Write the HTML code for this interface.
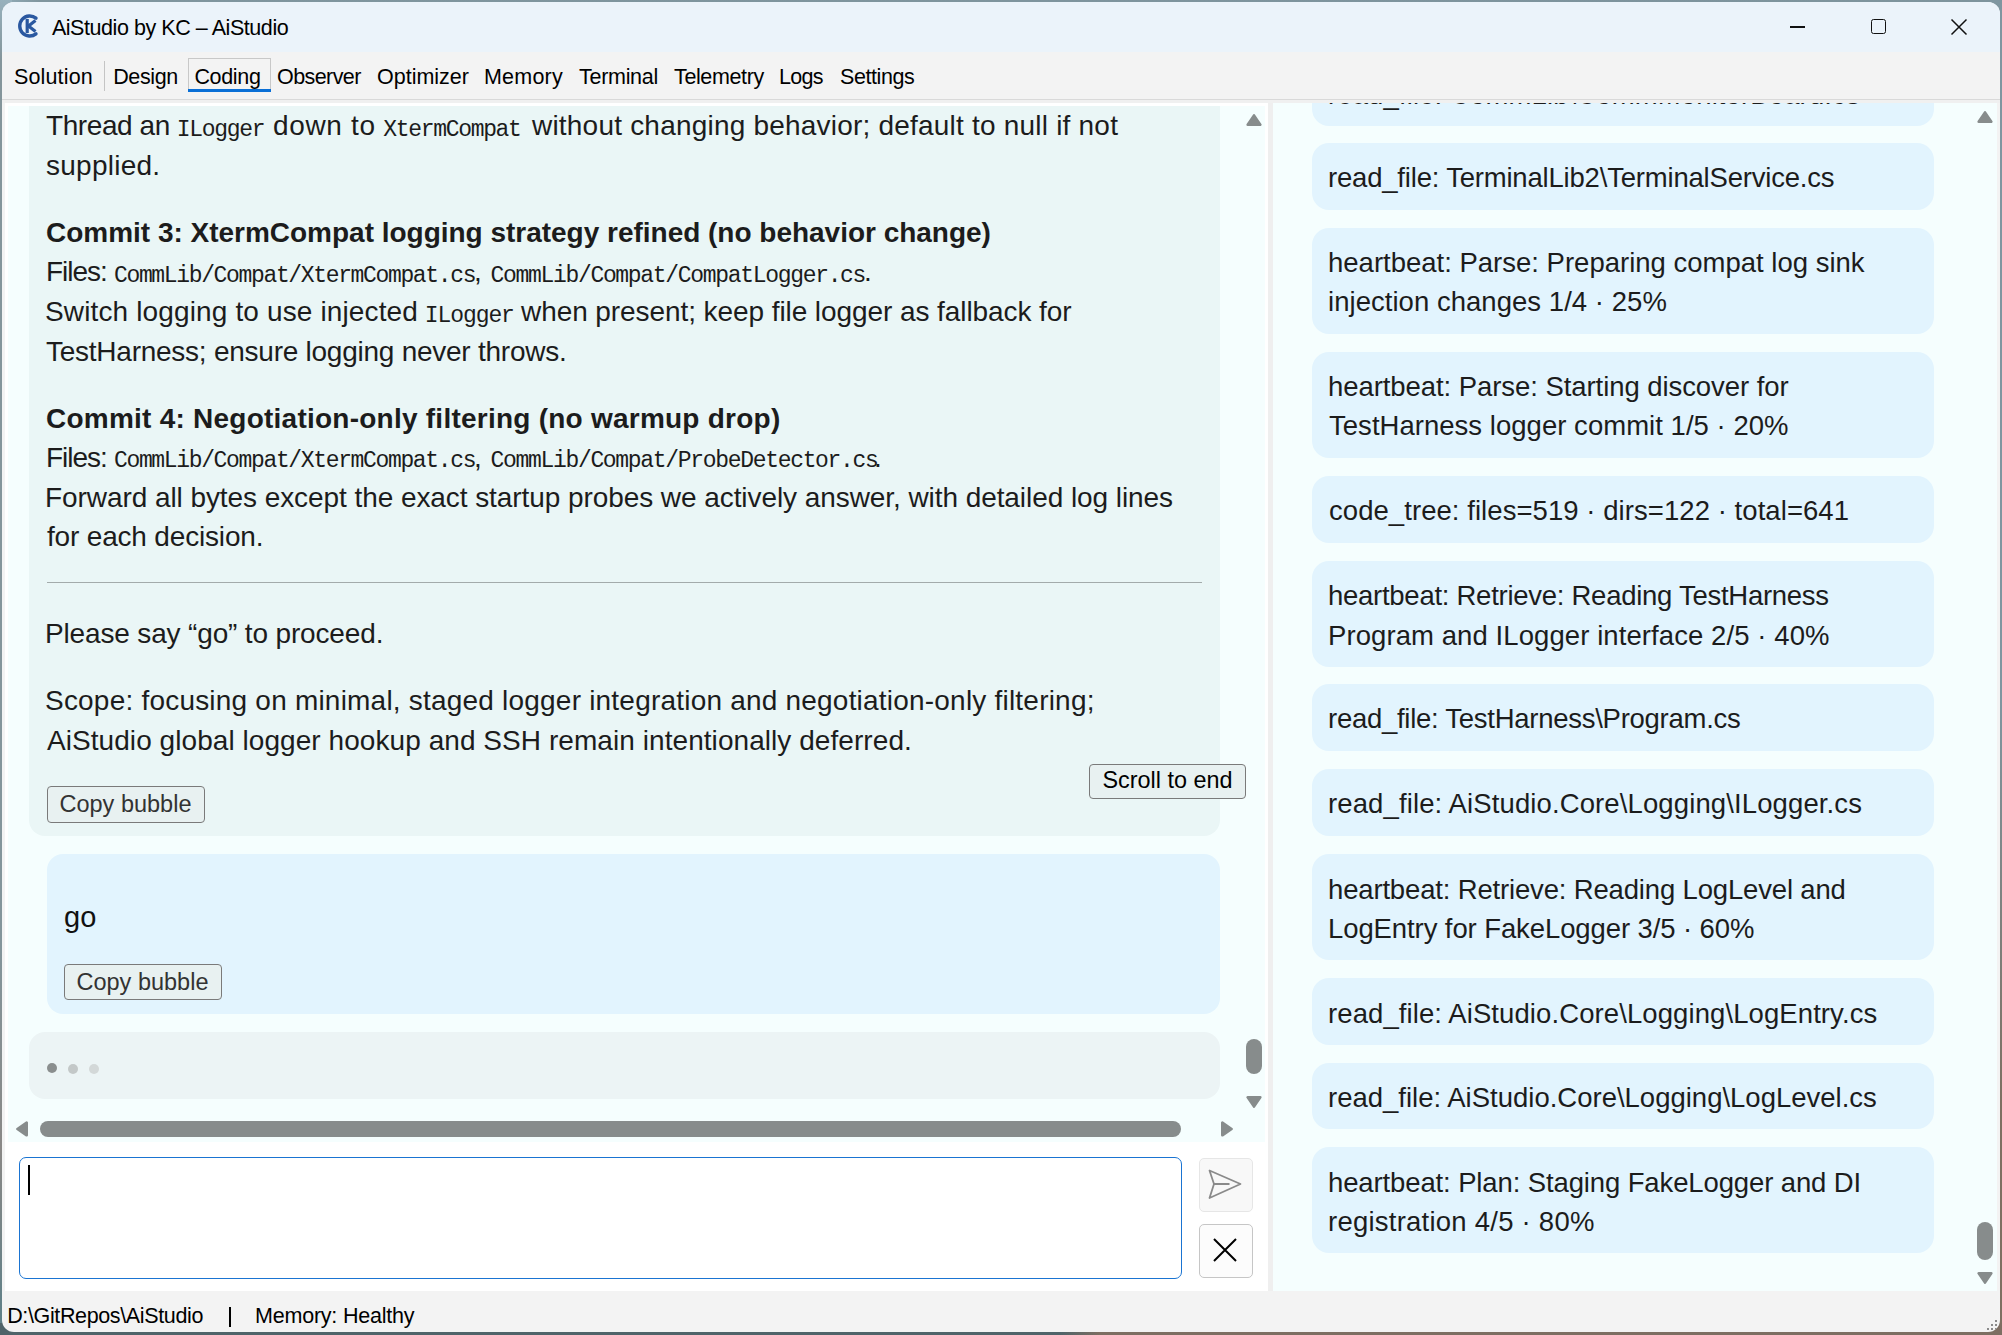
<!DOCTYPE html>
<html><head><meta charset="utf-8">
<style>
*{margin:0;padding:0;box-sizing:border-box}
html,body{width:2002px;height:1335px;overflow:hidden}
body{position:relative;font-family:"Liberation Sans",sans-serif;color:#111;background:linear-gradient(180deg,#8399a3 0%,#6d858c 60%,#7b6e62 100%)}
.a{position:absolute}
.t{position:absolute;white-space:pre;font-family:"Liberation Sans",sans-serif}
.m{font-family:"Liberation Mono",monospace;font-size:23px;letter-spacing:-1.35px}
#win{position:absolute;left:0;top:0;width:2002px;height:1335px;clip-path:inset(2px 2px 3px 2px round 12px);background:#f3f3f3}
.card{position:absolute;left:1312px;width:622px;background:#e2f4fe;border-radius:17px}
.sb{position:absolute;background:#878c8c}
.btn{position:absolute;border:1px solid #7a7a7a;border-radius:4px;background:#e8f1f1;font-size:23.5px;white-space:pre;color:#333}

</style></head><body>
<div class="a" style="left:0;top:0;width:2002px;height:12px;background:linear-gradient(90deg,#93adb9 0,#7f959e 40px,#7d939c 100%)"></div>
<div class="a" style="left:0;top:0;width:12px;height:1335px;background:linear-gradient(180deg,#97b1bd 0,#84959b 60px,#84959b 950px,#8a8886 1150px,#5f8088 1320px)"></div>
<div class="a" style="left:1990px;top:0;width:12px;height:1335px;background:linear-gradient(180deg,#7f96a0 0,#7f96a0 700px,#7d7062 1100px,#7d7062 1335px)"></div>
<div class="a" style="left:0;top:1323px;width:2002px;height:12px;background:linear-gradient(90deg,#4f6369 0,#4f6369 1060px,#7d6e62 1100px,#7d6e62 100%)"></div>
<div id="win">
  <!-- title bar -->
  <div class="a" style="left:0;top:0;width:2002px;height:52px;background:#ebf3fa"></div>
  <svg class="a" style="left:15px;top:12px" width="24" height="28" viewBox="0 0 24 28">
    <path d="M21 6.2 A10 10 0 1 0 21 21.8" fill="none" stroke="#2a58a0" stroke-width="3.4" stroke-linecap="round"/>
    <path d="M12.2 7 V21" fill="none" stroke="#2a58a0" stroke-width="3.2"/>
    <path d="M20.5 8.5 L13.5 14 L20.5 19.5" fill="none" stroke="#2a58a0" stroke-width="3.2"/>
  </svg>
  <div id="title" class="t" style="left:51.90px;top:12.65px;font-size:21.5px;line-height:30px;font-weight:normal;color:#000;letter-spacing:-0.442px">AiStudio by KC – AiStudio</div>
  <div class="a" style="left:1790px;top:26px;width:15px;height:1.5px;background:#111"></div>
  <div class="a" style="left:1871px;top:19px;width:15px;height:15px;border:1.6px solid #111;border-radius:2.5px"></div>
  <svg class="a" style="left:1950px;top:18px" width="18" height="18" viewBox="0 0 18 18"><path d="M1.5 1.5 L16.5 16.5 M16.5 1.5 L1.5 16.5" stroke="#111" stroke-width="1.5"/></svg>
  <!-- menu -->
  <div class="a" style="left:0;top:52px;width:2002px;height:47px;background:#f3f3f3"></div>
  <div class="a" style="left:0;top:99px;width:2002px;height:1px;background:#d9d9d9"></div>
  <div class="a" style="left:0;top:100px;width:2002px;height:3px;background:#f0f0f0"></div>
  <div class="a" style="left:104px;top:61px;width:1px;height:30px;background:#c4c4c4"></div>
  <div class="a" style="left:188px;top:58px;width:83px;height:34px;border:1px solid #c8c8c8;border-bottom:none"></div>
  <div class="a" style="left:188px;top:89px;width:83px;height:3px;background:#0a6fd6"></div>
  <div id="m0" class="t" style="left:14.00px;top:61.75px;font-size:21.5px;line-height:30px;font-weight:normal;color:#000;letter-spacing:0.143px">Solution</div>
<div id="m1" class="t" style="left:113.20px;top:61.75px;font-size:21.5px;line-height:30px;font-weight:normal;color:#000;letter-spacing:-0.360px">Design</div>
<div id="m2" class="t" style="left:194.40px;top:61.75px;font-size:21.5px;line-height:30px;font-weight:normal;color:#000;letter-spacing:-0.320px">Coding</div>
<div id="m3" class="t" style="left:277.00px;top:61.75px;font-size:21.5px;line-height:30px;font-weight:normal;color:#000;letter-spacing:-0.571px">Observer</div>
<div id="m4" class="t" style="left:377.00px;top:61.75px;font-size:21.5px;line-height:30px;font-weight:normal;color:#000;letter-spacing:0.000px">Optimizer</div>
<div id="m5" class="t" style="left:484.00px;top:61.75px;font-size:21.5px;line-height:30px;font-weight:normal;color:#000;letter-spacing:0.200px">Memory</div>
<div id="m6" class="t" style="left:579.00px;top:61.75px;font-size:21.5px;line-height:30px;font-weight:normal;color:#000;letter-spacing:-0.286px">Terminal</div>
<div id="m7" class="t" style="left:674.00px;top:61.75px;font-size:21.5px;line-height:30px;font-weight:normal;color:#000;letter-spacing:-0.375px">Telemetry</div>
<div id="m8" class="t" style="left:779.00px;top:61.75px;font-size:21.5px;line-height:30px;font-weight:normal;color:#000;letter-spacing:-0.667px">Logs</div>
<div id="m9" class="t" style="left:840.00px;top:61.75px;font-size:21.5px;line-height:30px;font-weight:normal;color:#000;letter-spacing:-0.429px">Settings</div>
  <!-- left pane -->
  <div class="a" style="left:5px;top:103px;width:1263px;height:1188px;background:#ffffff"></div>
  <div class="a" style="left:8px;top:106px;width:1257px;height:1036px;background:#f5fefe;overflow:hidden">
    <div class="a" style="left:21px;top:-60px;width:1191px;height:790px;background:#eaf6f6;border-radius:16px"></div>
    <div class="a" style="left:39px;top:748px;width:1173px;height:159.5px;background:#e2f4fe;border-radius:16px"></div>
    <div class="a" style="left:21px;top:926px;width:1191px;height:67px;background:#ecf4f5;border-radius:16px"></div>
  </div>
  <div class="a" style="left:8px;top:106px;width:1257px;height:1036px;overflow:hidden">
    <div style="position:absolute;left:-8px;top:-106px;width:2002px;height:1335px">
    <div id="l1a" class="t" style="left:46.00px;top:106.20px;font-size:28px;line-height:40px;font-weight:normal;color:#1c1c1c;letter-spacing:-0.412px">Thread an</div>
<div id="l1b" class="t" style="font-family:'Liberation Mono',monospace;left:176.70px;top:109.77px;font-size:23px;line-height:40px;font-weight:normal;color:#1c1c1c;letter-spacing:-1.283px">ILogger</div>
<div id="l1c" class="t" style="left:273.00px;top:106.20px;font-size:28px;line-height:40px;font-weight:normal;color:#1c1c1c;letter-spacing:0.667px">down to</div>
<div id="l1d" class="t" style="font-family:'Liberation Mono',monospace;left:383.20px;top:109.77px;font-size:23px;line-height:40px;font-weight:normal;color:#1c1c1c;letter-spacing:-1.310px">XtermCompat</div>
<div id="l1e" class="t" style="left:532.00px;top:106.20px;font-size:28px;line-height:40px;font-weight:normal;color:#1c1c1c;letter-spacing:0.208px">without changing behavior; default to null if not</div>
<div id="l2" class="t" style="left:46.00px;top:146.20px;font-size:28px;line-height:40px;font-weight:normal;color:#1c1c1c;letter-spacing:0.250px">supplied.</div>
<div id="l3" class="t" style="left:46.00px;top:213.20px;font-size:28px;line-height:40px;font-weight:bold;color:#1c1c1c;letter-spacing:-0.015px">Commit 3: XtermCompat logging strategy refined (no behavior change)</div>
<div id="l4a" class="t" style="left:46.00px;top:252.20px;font-size:28px;line-height:40px;font-weight:normal;color:#1c1c1c;letter-spacing:-1.040px">Files:</div>
<div id="l4b" class="t" style="font-family:'Liberation Mono',monospace;left:114.00px;top:255.77px;font-size:23px;line-height:40px;font-weight:normal;color:#1c1c1c;letter-spacing:-1.350px">CommLib/Compat/XtermCompat.cs</div>
<div id="l4c" class="t" style="left:474.00px;top:252.20px;font-size:28px;line-height:40px;font-weight:normal;color:#1c1c1c;letter-spacing:0.000px">,</div>
<div id="l4d" class="t" style="font-family:'Liberation Mono',monospace;left:490.50px;top:255.77px;font-size:23px;line-height:40px;font-weight:normal;color:#1c1c1c;letter-spacing:-1.316px">CommLib/Compat/CompatLogger.cs</div>
<div id="l4e" class="t" style="left:864.00px;top:252.20px;font-size:28px;line-height:40px;font-weight:normal;color:#1c1c1c;letter-spacing:0.000px">.</div>
<div id="l5a" class="t" style="left:45.00px;top:292.20px;font-size:28px;line-height:40px;font-weight:normal;color:#1c1c1c;letter-spacing:0.138px">Switch logging to use injected</div>
<div id="l5b" class="t" style="font-family:'Liberation Mono',monospace;left:424.80px;top:295.77px;font-size:23px;line-height:40px;font-weight:normal;color:#1c1c1c;letter-spacing:-1.083px">ILogger</div>
<div id="l5c" class="t" style="left:521.00px;top:292.20px;font-size:28px;line-height:40px;font-weight:normal;color:#1c1c1c;letter-spacing:-0.078px">when present; keep file logger as fallback for</div>
<div id="l6" class="t" style="left:46.00px;top:331.70px;font-size:28px;line-height:40px;font-weight:normal;color:#1c1c1c;letter-spacing:-0.250px">TestHarness; ensure logging never throws.</div>
<div id="l7" class="t" style="left:46.00px;top:399.20px;font-size:28px;line-height:40px;font-weight:bold;color:#1c1c1c;letter-spacing:0.240px">Commit 4: Negotiation-only filtering (no warmup drop)</div>
<div id="l8a" class="t" style="left:46.00px;top:437.70px;font-size:28px;line-height:40px;font-weight:normal;color:#1c1c1c;letter-spacing:-1.040px">Files:</div>
<div id="l8b" class="t" style="font-family:'Liberation Mono',monospace;left:114.00px;top:441.27px;font-size:23px;line-height:40px;font-weight:normal;color:#1c1c1c;letter-spacing:-1.350px">CommLib/Compat/XtermCompat.cs</div>
<div id="l8c" class="t" style="left:474.00px;top:437.70px;font-size:28px;line-height:40px;font-weight:normal;color:#1c1c1c;letter-spacing:0.000px">,</div>
<div id="l8d" class="t" style="font-family:'Liberation Mono',monospace;left:490.50px;top:441.27px;font-size:23px;line-height:40px;font-weight:normal;color:#1c1c1c;letter-spacing:-1.317px">CommLib/Compat/ProbeDetector.cs</div>
<div id="l8e" class="t" style="left:874.00px;top:437.70px;font-size:28px;line-height:40px;font-weight:normal;color:#1c1c1c;letter-spacing:0.000px">.</div>
<div id="l9" class="t" style="left:45.00px;top:477.70px;font-size:28px;line-height:40px;font-weight:normal;color:#1c1c1c;letter-spacing:-0.071px">Forward all bytes except the exact startup probes we actively answer, with detailed log lines</div>
<div id="l10" class="t" style="left:47.00px;top:516.90px;font-size:28px;line-height:40px;font-weight:normal;color:#1c1c1c;letter-spacing:-0.176px">for each decision.</div>
<div id="l11" class="t" style="left:45.00px;top:614.20px;font-size:28px;line-height:40px;font-weight:normal;color:#1c1c1c;letter-spacing:-0.154px">Please say “go” to proceed.</div>
<div id="l12" class="t" style="left:45.00px;top:680.90px;font-size:28px;line-height:40px;font-weight:normal;color:#1c1c1c;letter-spacing:0.208px">Scope: focusing on minimal, staged logger integration and negotiation-only filtering;</div>
<div id="l13" class="t" style="left:47.00px;top:721.20px;font-size:28px;line-height:40px;font-weight:normal;color:#1c1c1c;letter-spacing:0.060px">AiStudio global logger hookup and SSH remain intentionally deferred.</div>
    </div>
  </div>
  <div class="a" style="left:47px;top:582px;width:1155px;height:1px;background:#a3abab"></div>
  <div class="btn" style="left:47px;top:786px;width:158px;height:36.5px"></div>
  <div class="t" style="left:59.5px;top:786px;font-size:23.5px;line-height:36px;color:#333">Copy bubble</div>
  <div class="btn" style="left:1089px;top:763.5px;width:157px;height:35px"></div>
  <div class="t" style="left:1102.5px;top:763px;font-size:23.4px;line-height:35px;color:#000">Scroll to end</div>
  <div class="t" style="left:64px;top:899px;font-size:29px;line-height:36px;color:#111">go</div>
  <div class="btn" style="left:64px;top:964px;width:158px;height:36px"></div>
  <div class="t" style="left:76.5px;top:964px;font-size:23.5px;line-height:36px;color:#333">Copy bubble</div>
  <div class="a" style="left:47px;top:1063px;width:10px;height:10px;border-radius:5px;background:#8a8e8e"></div>
  <div class="a" style="left:68px;top:1064px;width:10px;height:10px;border-radius:5px;background:#c3c8c8"></div>
  <div class="a" style="left:89px;top:1064px;width:10px;height:10px;border-radius:5px;background:#d3d8d8"></div>
  <!-- left scrollbars -->
  <svg class="a" style="left:1246px;top:114px" width="16" height="12" viewBox="0 0 16 12"><path d="M8 1.4 L14.3 10.7 L1.7 10.7 Z" fill="#878c8c" stroke="#878c8c" stroke-width="2.6" stroke-linejoin="round"/></svg>
  <div class="sb" style="left:1246px;top:1039px;width:16px;height:35px;border-radius:8px"></div>
  <svg class="a" style="left:1246px;top:1096px" width="16" height="12" viewBox="0 0 16 12"><path d="M1.7 1.3 L14.3 1.3 L8 10.6 Z" fill="#878c8c" stroke="#878c8c" stroke-width="2.6" stroke-linejoin="round"/></svg>
  <svg class="a" style="left:16px;top:1121px" width="12" height="16" viewBox="0 0 12 16"><path d="M10.7 1.7 L10.7 14.3 L1.4 8 Z" fill="#878c8c" stroke="#878c8c" stroke-width="2.6" stroke-linejoin="round"/></svg>
  <div class="sb" style="left:40px;top:1121px;width:1141px;height:16px;border-radius:8px"></div>
  <svg class="a" style="left:1221px;top:1121px" width="12" height="16" viewBox="0 0 12 16"><path d="M1.3 1.7 L1.3 14.3 L10.6 8 Z" fill="#878c8c" stroke="#878c8c" stroke-width="2.6" stroke-linejoin="round"/></svg>
  <!-- input -->
  <div class="a" style="left:19px;top:1157px;width:1163px;height:122px;border:1.5px solid #1a74d2;border-radius:7px;background:#fff"></div>
  <div class="a" style="left:28px;top:1165px;width:1.5px;height:30px;background:#000"></div>
  <div class="a" style="left:1199px;top:1158px;width:54px;height:54px;border:1px solid #e6e6e6;border-radius:5px;background:#f8f8f8"></div>
  <svg class="a" style="left:1199px;top:1158px" width="54" height="54" viewBox="0 0 54 54"><path d="M10.5 12.5 L41.5 26 L10.5 40 L15 26 Z M15 26 L30.5 26" fill="none" stroke="#8a8a8a" stroke-width="1.8" stroke-linejoin="round"/></svg>
  <div class="a" style="left:1199px;top:1224px;width:54px;height:54px;border:1px solid #c6c6c6;border-radius:5px;background:#fcfcfc"></div>
  <svg class="a" style="left:1199px;top:1224px" width="54" height="54" viewBox="0 0 54 54"><path d="M15 15 L37 37 M37 15 L15 37" fill="none" stroke="#000" stroke-width="2"/></svg>
  <!-- splitter -->
  <div class="a" style="left:1268px;top:103px;width:5px;height:1188px;background:#efefef"></div>
  <!-- right pane -->
  <div class="a" style="left:1273px;top:103px;width:724px;height:1188px;background:#f5fefe;overflow:hidden">
    <div style="position:absolute;left:-1273px;top:-103px;width:2002px;height:1335px">
    <div class="card" style="top:59.5px;height:66.0px"></div>
<div class="card" style="top:143.0px;height:67.0px"></div>
<div class="card" style="top:228.0px;height:106.0px"></div>
<div class="card" style="top:352.0px;height:106.0px"></div>
<div class="card" style="top:476.0px;height:67.0px"></div>
<div class="card" style="top:560.5px;height:106.0px"></div>
<div class="card" style="top:684.0px;height:67.0px"></div>
<div class="card" style="top:769.0px;height:67.0px"></div>
<div class="card" style="top:854.3px;height:106.0px"></div>
<div class="card" style="top:978.3px;height:66.5px"></div>
<div class="card" style="top:1062.5px;height:66.5px"></div>
<div class="card" style="top:1147.3px;height:106.0px"></div>
    <div id="c0_0" class="t" style="left:1328.00px;top:74.87px;font-size:27.5px;line-height:40px;font-weight:normal;color:#1c1c1c;letter-spacing:0.119px">read_file: CommLib\CommMonitorBoard.cs</div>
<div id="c1_0" class="t" style="left:1328.00px;top:158.37px;font-size:27.5px;line-height:40px;font-weight:normal;color:#1c1c1c;letter-spacing:-0.195px">read_file: TerminalLib2\TerminalService.cs</div>
<div id="c2_0" class="t" style="left:1328.00px;top:243.37px;font-size:27.5px;line-height:40px;font-weight:normal;color:#1c1c1c;letter-spacing:0.000px">heartbeat: Parse: Preparing compat log sink</div>
<div id="c2_1" class="t" style="left:1328.00px;top:282.27px;font-size:27.5px;line-height:40px;font-weight:normal;color:#1c1c1c;letter-spacing:0.038px">injection changes 1/4 · 25%</div>
<div id="c3_0" class="t" style="left:1328.00px;top:367.37px;font-size:27.5px;line-height:40px;font-weight:normal;color:#1c1c1c;letter-spacing:-0.066px">heartbeat: Parse: Starting discover for</div>
<div id="c3_1" class="t" style="left:1329.00px;top:406.27px;font-size:27.5px;line-height:40px;font-weight:normal;color:#1c1c1c;letter-spacing:0.029px">TestHarness logger commit 1/5 · 20%</div>
<div id="c4_0" class="t" style="left:1329.00px;top:491.37px;font-size:27.5px;line-height:40px;font-weight:normal;color:#1c1c1c;letter-spacing:0.060px">code_tree: files=519 · dirs=122 · total=641</div>
<div id="c5_0" class="t" style="left:1328.00px;top:575.87px;font-size:27.5px;line-height:40px;font-weight:normal;color:#1c1c1c;letter-spacing:-0.269px">heartbeat: Retrieve: Reading TestHarness</div>
<div id="c5_1" class="t" style="left:1328.00px;top:615.87px;font-size:27.5px;line-height:40px;font-weight:normal;color:#1c1c1c;letter-spacing:0.082px">Program and ILogger interface 2/5 · 40%</div>
<div id="c6_0" class="t" style="left:1328.00px;top:699.37px;font-size:27.5px;line-height:40px;font-weight:normal;color:#1c1c1c;letter-spacing:-0.269px">read_file: TestHarness\Program.cs</div>
<div id="c7_0" class="t" style="left:1328.00px;top:784.37px;font-size:27.5px;line-height:40px;font-weight:normal;color:#1c1c1c;letter-spacing:0.119px">read_file: AiStudio.Core\Logging\ILogger.cs</div>
<div id="c8_0" class="t" style="left:1328.00px;top:869.67px;font-size:27.5px;line-height:40px;font-weight:normal;color:#1c1c1c;letter-spacing:-0.163px">heartbeat: Retrieve: Reading LogLevel and</div>
<div id="c8_1" class="t" style="left:1328.00px;top:908.57px;font-size:27.5px;line-height:40px;font-weight:normal;color:#1c1c1c;letter-spacing:-0.097px">LogEntry for FakeLogger 3/5 · 60%</div>
<div id="c9_0" class="t" style="left:1328.00px;top:993.67px;font-size:27.5px;line-height:40px;font-weight:normal;color:#1c1c1c;letter-spacing:0.093px">read_file: AiStudio.Core\Logging\LogEntry.cs</div>
<div id="c10_0" class="t" style="left:1328.00px;top:1077.87px;font-size:27.5px;line-height:40px;font-weight:normal;color:#1c1c1c;letter-spacing:0.000px">read_file: AiStudio.Core\Logging\LogLevel.cs</div>
<div id="c11_0" class="t" style="left:1328.00px;top:1162.67px;font-size:27.5px;line-height:40px;font-weight:normal;color:#1c1c1c;letter-spacing:-0.122px">heartbeat: Plan: Staging FakeLogger and DI</div>
<div id="c11_1" class="t" style="left:1328.00px;top:1201.57px;font-size:27.5px;line-height:40px;font-weight:normal;color:#1c1c1c;letter-spacing:0.238px">registration 4/5 · 80%</div>
    </div>
  </div>
  <svg class="a" style="left:1977px;top:111px" width="16" height="12" viewBox="0 0 16 12"><path d="M8 1.4 L14.3 10.7 L1.7 10.7 Z" fill="#878c8c" stroke="#878c8c" stroke-width="2.6" stroke-linejoin="round"/></svg>
  <div class="sb" style="left:1977px;top:1222px;width:16px;height:38px;border-radius:8px"></div>
  <svg class="a" style="left:1977px;top:1272px" width="16" height="12" viewBox="0 0 16 12"><path d="M1.7 1.3 L14.3 1.3 L8 10.6 Z" fill="#878c8c" stroke="#878c8c" stroke-width="2.6" stroke-linejoin="round"/></svg>
  <!-- status -->
  <div id="st1" class="t" style="left:7.20px;top:1300.75px;font-size:21.5px;line-height:30px;font-weight:normal;color:#000;letter-spacing:-0.368px">D:\GitRepos\AiStudio</div>
<div id="st2" class="t" style="left:255.00px;top:1300.75px;font-size:21.5px;line-height:30px;font-weight:normal;color:#000;letter-spacing:-0.214px">Memory: Healthy</div>
  <div class="a" style="left:2px;top:1332px;width:1998px;height:1px;background:#fbfbfb"></div>
  <div class="a" style="left:228.5px;top:1306.5px;width:2px;height:20.5px;background:#000"></div>
  <div class="a" style="left:1995px;top:1320px;width:2px;height:2px;background:#8a8a8a"></div>
  <div class="a" style="left:1991px;top:1324px;width:2px;height:2px;background:#8a8a8a"></div>
  <div class="a" style="left:1995px;top:1324px;width:2px;height:2px;background:#8a8a8a"></div>
  <div class="a" style="left:1987px;top:1328px;width:2px;height:2px;background:#8a8a8a"></div>
  <div class="a" style="left:1991px;top:1328px;width:2px;height:2px;background:#8a8a8a"></div>
  <div class="a" style="left:1995px;top:1328px;width:2px;height:2px;background:#8a8a8a"></div>
</div>

</body></html>
